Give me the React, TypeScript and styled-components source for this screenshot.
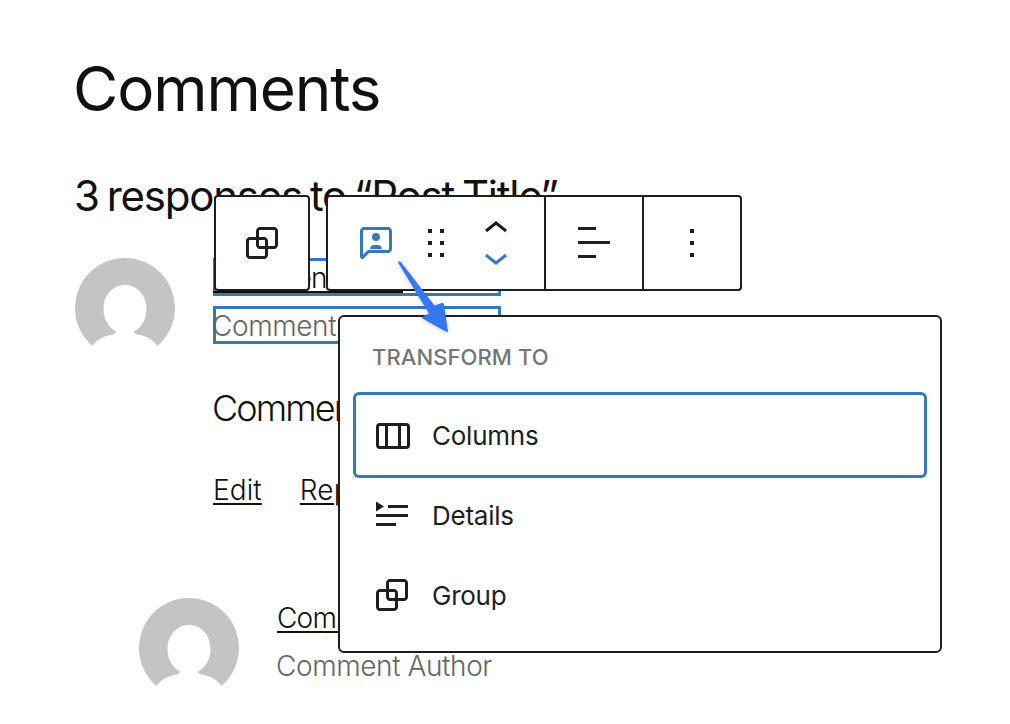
import React from "react";
import styled, { createGlobalStyle } from "styled-components";

const Global = createGlobalStyle`
  * { box-sizing: border-box; }
  body { margin: 0; background: #fff; font-family: Inter, "Liberation Sans", sans-serif; overflow: hidden; }
`;

const Page = styled.main`
  position: relative;
  width: 1010px;
  height: 724px;
  overflow: hidden;
  background: #fff;
  color: #111;
  padding: 39px 0 0 75px;
`;

const Title = styled.h1`
  margin: 0 0 0 -2px;
  height: 100px;
  line-height: 100px;
  font-size: 62px;
  font-weight: 400;
  letter-spacing: -1.1px;
  white-space: nowrap;
`;

const Subtitle = styled.h2`
  margin: 32px 0 0 -1px;
  height: 50px;
  line-height: 50px;
  font-size: 42px;
  font-weight: 400;
  letter-spacing: -1.25px;
  word-spacing: -2.5px;
  white-space: nowrap;
`;

const Thread = styled.section`
  margin-top: 37px;
`;

const Comment = styled.article<{ $nested?: boolean }>`
  display: flex;
  gap: 38px;
  margin-left: ${(p) => (p.$nested ? 64 : 0)}px;
  height: 340px;
`;

const AvatarSvg = styled.svg`
  flex: none;
  width: 100px;
  height: 100px;
`;

const Body = styled.div`
  display: flex;
  flex-direction: column;
  align-items: flex-start;
`;

const Field = styled.div<{ $outlined?: boolean; $muted?: boolean }>`
  width: 288px;
  height: 38px;
  margin-bottom: 10px;
  line-height: 40px;
  font-size: 28px;
  font-weight: 300;
  letter-spacing: -0.4px;
  text-indent: ${(p) => (p.$muted ? -1 : 0)}px;
  white-space: nowrap;
  color: ${(p) => (p.$muted ? "#666" : "#111")};
  box-shadow: ${(p) => (p.$outlined ? "inset 0 0 0 3px #357ab6" : "none")};
`;

const Link = styled.span<{ $action?: boolean }>`
  font-size: 28px;
  font-weight: 300;
  letter-spacing: ${(p) => (p.$action ? 0.1 : -0.8)}px;
  word-spacing: ${(p) => (p.$action ? 0 : 5)}px;
  text-decoration: underline;
  text-decoration-thickness: 2px;
  text-underline-offset: 3px;
`;

const Content = styled.p`
  margin: 29px 0 0 -1px;
  height: 50px;
  line-height: 50px;
  font-size: 36px;
  font-weight: 300;
  letter-spacing: -1.9px;
  white-space: nowrap;
`;

const Actions = styled.div`
  display: flex;
  gap: 38px;
  margin-top: 38px;
  line-height: 38px;
`;

const Toolbars = styled.div`
  position: absolute;
  left: 214px;
  top: 195px;
  display: flex;
  gap: 16px;
`;

const Toolbar = styled.div`
  display: flex;
  height: 96px;
  background: #fff;
  border: 2px solid #1e1e1e;
  border-radius: 4px;
`;

const Group = styled.div<{ $wide?: boolean }>`
  display: flex;
  align-items: center;
  justify-content: center;
  gap: 12px;
  width: ${(p) => (p.$wide ? 216 : 92)}px;
  & + & {
    width: 98px;
    border-left: 2px solid #1e1e1e;
  }
`;

const Movers = styled.div`
  display: flex;
  flex-direction: column;
  svg + svg { margin-top: -20px; }
`;

const IconSvg = styled.svg<{ $accent?: boolean }>`
  display: block;
  flex: none;
  width: 48px;
  height: 48px;
  fill: ${(p) => (p.$accent ? "#357ab6" : "#1e1e1e")};
`;

const Menu = styled.div`
  position: absolute;
  left: 338px;
  top: 315px;
  width: 604px;
  height: 338px;
  padding: 16px;
  background: #fff;
  border: 2px solid #1e1e1e;
  border-radius: 6px;
`;

const MenuLabel = styled.div`
  height: 62px;
  padding-left: 16px;
  line-height: 48px;
  font-size: 22px;
  font-weight: 500;
  letter-spacing: 0.08px;
  color: #757575;
`;

const MenuItem = styled.div<{ $focused?: boolean }>`
  display: flex;
  align-items: center;
  gap: 16px;
  height: 80px;
  padding-left: 12px;
  border-radius: 3px;
  font-size: 26px;
  letter-spacing: -0.25px;
  color: #1e1e1e;
  box-shadow: ${(p) => (p.$focused ? "0 0 0 3px #357ab6" : "none")};
`;

const Arrow = styled.svg`
  position: absolute;
  left: 390px;
  top: 250px;
  width: 70px;
  height: 95px;
  filter: drop-shadow(0 1px 2px rgba(0, 0, 0, 0.2));
`;

const paths = {
  group:
    "M18 4h-7c-1.1 0-2 .9-2 2v3H6c-1.1 0-2 .9-2 2v7c0 1.1.9 2 2 2h7c1.1 0 2-.9 2-2v-3h3c1.1 0 2-.9 2-2V6c0-1.1-.9-2-2-2zm-4.5 14c0 .3-.2.5-.5.5H6c-.3 0-.5-.2-.5-.5v-7c0-.3.2-.5.5-.5h3V13c0 1.1.9 2 2 2h2.5v3zm0-4.5H11c-.3 0-.5-.2-.5-.5v-2.5H13c.3 0 .5.2.5.5v2.5zm5-.5c0 .3-.2.5-.5.5h-3V11c0-1.1-.9-2-2-2h-2.5V6c0-.3.2-.5.5-.5h7c.3 0 .5.2.5.5v7z",
  author:
    "M18 4H6c-1.1 0-2 .9-2 2v12.9c0 .6.5 1.1 1.1 1.1.3 0 .5-.1.8-.3L8.5 17H18c1.1 0 2-.9 2-2V6c0-1.1-.9-2-2-2zm.5 11c0 .3-.2.5-.5.5H7.9l-2.4 2.4V6c0-.3.2-.5.5-.5h12c.3 0 .5.2.5.5v9z M15 15c0-1.1-.9-2-2-2h-2c-1.1 0-2 .9-2 2z M10 9a2 2 0 1 0 4 0a2 2 0 1 0-4 0z",
  drag: "M8 7h2V5H8v2zm0 6h2v-2H8v2zm0 6h2v-2H8v2zm6-14v2h2V5h-2zm0 8h2v-2h-2v2zm0 6h2v-2h-2v2z",
  up: "M6.5 12.4L12 8l5.5 4.4-.9 1.2L12 10l-4.5 3.6-1-1.2z",
  down: "M17.5 11.6L12 16l-5.5-4.4.9-1.2L12 14l4.5-3.6 1 1.2z",
  align: "M13 5.5H4V4h9v1.5Zm7 7H4V11h16v1.5Zm-7 7H4V18h9v1.5Z",
  more: "M13 19h-2v-2h2v2zm0-6h-2v-2h2v2zm0-6h-2V5h2v2z",
  columns:
    "M15 7.5h-5v10h5v-10zm1.5 0v10H19a.5.5 0 0 0 .5-.5V8a.5.5 0 0 0-.5-.5h-2.5zM6 7.5h2.5v10H6a.5.5 0 0 1-.5-.5V8a.5.5 0 0 1 .5-.5zM6 6h13a2 2 0 0 1 2 2v9a2 2 0 0 1-2 2H6a2 2 0 0 1-2-2V8a2 2 0 0 1 2-2z",
  details:
    "M4 16h10v1.5H4V16zm0-4.5h16V13H4v-1.5zM10 7h10v1.5H10V7z M4 5.25l4 2.5-4 2.5v-5z",
};

const Icon = ({ name, accent }: { name: keyof typeof paths; accent?: boolean }) => (
  <IconSvg viewBox="0 0 24 24" $accent={accent} aria-hidden>
    <path d={paths[name]} fillRule="evenodd" clipRule="evenodd" />
  </IconSvg>
);

const Avatar = () => (
  <AvatarSvg viewBox="0 0 100 100" aria-hidden>
    <path
      fill="#c4c4c4"
      d="M17.500 88A50 50 0 1 1 82.500 88C77 80.500 71 78 62 76.500Q60 76 58.500 73.800C66 70 71.500 62 71.500 51C71.500 37 62 27 50 27S28.500 37 28.500 51C28.500 62 34 70 41.500 73.800Q40 76 38 76.500C29 78 23 80.500 17.500 88Z"
    />
  </AvatarSvg>
);

export default function App() {
  return (
    <>
      <Global />
      <Page>
        <Title>Comments</Title>
        <Subtitle>3 responses to “Post Title”</Subtitle>
        <Thread>
          <Comment>
            <Avatar />
            <Body>
              <Field $outlined><Link>Comment Date</Link></Field>
              <Field $outlined $muted>Comment Author</Field>
              <Content>Comment Content</Content>
              <Actions>
                <Link $action>Edit</Link>
                <Link $action>Reply</Link>
              </Actions>
            </Body>
          </Comment>
          <Comment $nested>
            <Avatar />
            <Body>
              <Field><Link>Comment Date</Link></Field>
              <Field $muted>Comment Author</Field>
            </Body>
          </Comment>
        </Thread>

        <Toolbars>
          <Toolbar>
            <Group><Icon name="group" /></Group>
          </Toolbar>
          <Toolbar>
            <Group $wide>
              <Icon name="author" accent />
              <Icon name="drag" />
              <Movers>
                <Icon name="up" />
                <Icon name="down" accent />
              </Movers>
            </Group>
            <Group><Icon name="align" /></Group>
            <Group><Icon name="more" /></Group>
          </Toolbar>
        </Toolbars>

        <Menu>
          <MenuLabel>TRANSFORM TO</MenuLabel>
          <MenuItem $focused><Icon name="columns" />Columns</MenuItem>
          <MenuItem><Icon name="details" />Details</MenuItem>
          <MenuItem><Icon name="group" />Group</MenuItem>
        </Menu>

        <Arrow viewBox="390 250 70 95" aria-hidden>
          <path
            fill="#3478f6"
            d="M398 262.500Q398.500 260.500 400.500 261.500L434.500 305.500L442 303Q443.500 302.600 443.800 304L448 331Q448 332.500 446.500 332L422.500 318.500Q421.500 317.500 423 316.600L429 313.500Z"
          />
        </Arrow>
      </Page>
    </>
  );
}
